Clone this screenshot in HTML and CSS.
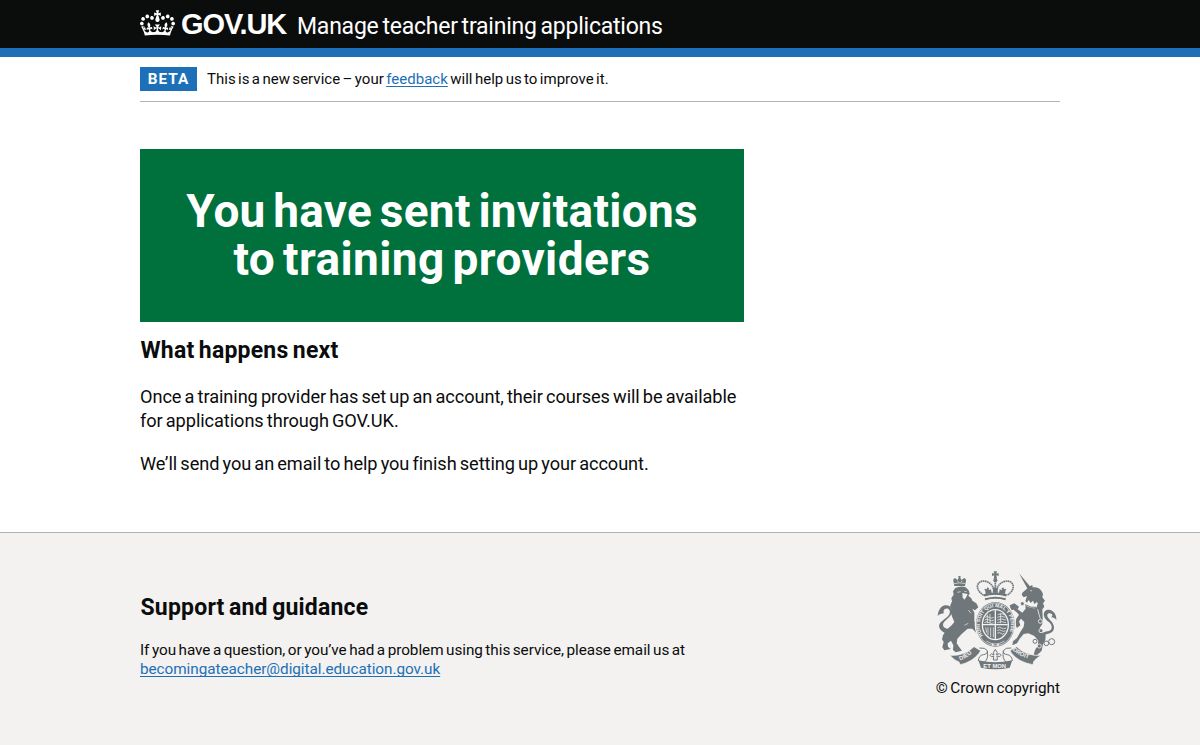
FILE: index.html
```html
<!DOCTYPE html>
<html lang="en">
<head>
<meta charset="utf-8">
<title>Manage teacher training applications</title>
<link rel="stylesheet" href="styles.css">
</head>
<body>
<header class="header">
  <div class="container header-row">
    <svg class="crown" viewBox="0 0 132 97" aria-hidden="true"><path fill="#fff" fill-rule="evenodd" d="M25 30.2c3.5 1.5 7.7-.2 9.1-3.7 1.5-3.6-.2-7.8-3.9-9.2-3.6-1.4-7.6.3-9.1 3.9-1.4 3.5.3 7.5 3.9 9zM9 39.5c3.6 1.5 7.8-.2 9.2-3.7 1.5-3.6-.2-7.8-3.9-9.1-3.6-1.5-7.6.2-9.1 3.8-1.4 3.5.3 7.5 3.8 9zM4.4 57.2c3.5 1.5 7.7-.2 9.1-3.8 1.5-3.6-.2-7.7-3.9-9.1-3.5-1.5-7.6.3-9.1 3.8-1.4 3.5.3 7.6 3.9 9.1zm38.3-21.4c3.5 1.5 7.7-.2 9.1-3.8 1.5-3.6-.2-7.7-3.9-9.1-3.6-1.5-7.6.3-9.1 3.8-1.3 3.6.4 7.7 3.9 9.1zm64.4-5.6c-3.6 1.5-7.8-.2-9.1-3.7-1.5-3.6.2-7.8 3.8-9.2 3.6-1.4 7.7.3 9.2 3.9 1.3 3.5-.4 7.5-3.9 9zm15.9 9.3c-3.6 1.5-7.7-.2-9.1-3.7-1.5-3.6.2-7.8 3.7-9.1 3.6-1.5 7.7.2 9.2 3.8 1.5 3.5-.3 7.5-3.8 9zm4.7 17.7c-3.6 1.5-7.8-.2-9.2-3.8-1.5-3.6.2-7.7 3.9-9.1 3.6-1.5 7.7.3 9.2 3.8 1.3 3.5-.4 7.6-3.9 9.1zM89.3 35.8c-3.6 1.5-7.8-.2-9.2-3.8-1.4-3.6.2-7.7 3.9-9.1 3.6-1.5 7.7.3 9.2 3.8 1.4 3.6-.3 7.7-3.9 9.1zM69.7 17.7l8.9 4.7V9.3l-8.9 2.8c-.2-.3-.5-.6-.9-.9L72.4 0H59.6l3.5 11.2c-.3.3-.6.5-.9.9l-8.8-2.8v13.1l8.8-4.7c.3.3.6.7.9.9l-5 15.4v.1c-.2.8-.4 1.6-.4 2.4 0 4.1 3.1 7.5 7 8.1h.2c.3 0 .7.1 1 .1.4 0 .7 0 1-.1h.2c4-.6 7.1-4.1 7.1-8.1 0-.8-.1-1.7-.4-2.4V34l-5.1-15.4c.4-.2.7-.6 1-.9zM66 92.8c16.9 0 32.8 1.1 47.1 3.2 4-16.9 8.9-26.7 14-33.5l-9.6-3.4c1 4.9 1.1 7.2 0 10.2-1.5-1.4-3-4.3-4.2-8.7L108.6 76c2.8-2 5-3.2 7.5-3.3-4.4 9.4-10 11.9-13.6 11.2-4.3-.8-6.3-4.6-5.6-7.9 1-4.7 5.7-5.9 8-.5 4.3-8.7-3-11.4-7.6-8.8 7.1-7.2 7.9-13.5 2.1-21.1-8 6.1-8.1 12.3-4.5 20.8-4.7-5.4-12.1-2.5-9.5 6.2 3.4-5.2 7.9-2 7.2 3.1-.6 4.3-6.4 7.8-13.5 7.2-10.3-.9-10.9-8-11.2-13.8 2.5-.5 7.1 1.8 11 7.3L80.2 60c-4.1 4.4-8 5.3-12.3 5.4 1.4-4.4 8-11.6 8-11.6H55.5s6.4 7.2 7.9 11.6c-4.2-.1-8-1-12.3-5.4l1.4 16.4c3.9-5.5 8.5-7.7 10.9-7.3-.3 5.8-.9 12.8-11.1 13.8-7.2.6-12.9-2.9-13.5-7.2-.7-5 3.8-8.3 7.1-3.1 2.7-8.7-4.6-11.6-9.4-6.2 3.7-8.5 3.6-14.7-4.6-20.8-5.8 7.6-5 13.9 2.2 21.1-4.7-2.6-11.9.1-7.7 8.8 2.3-5.5 7.1-4.2 8.1.5.7 3.3-1.3 7.1-5.7 7.9-3.5.7-9-1.8-13.5-11.2 2.5.1 4.7 1.3 7.5 3.3l-4.7-15.4c-1.2 4.4-2.7 7.2-4.3 8.7-1.1-3-.9-5.3 0-10.2l-9.5 3.4c5 6.9 9.9 16.7 14 33.5 14.8-2.1 30.8-3.2 47.7-3.2z"/></svg>
    <span class="logotype">GOV.UK</span>
    <span class="service">Manage teacher training applications</span>
  </div>
</header>
<div class="container">
  <div class="phase">
    <strong class="tag">BETA</strong>
    <span class="phase-text">This is a new service – your <a class="link" href="#">feedback</a> will help us to improve it.</span>
  </div>
  <main class="main">
    <div class="panel"><h1 class="panel-title"><span class="line line-a">You have sent invitations</span><span class="line line-b">to training providers</span></h1></div>
    <h2 class="heading next">What happens next</h2>
    <p class="body"><span class="line body-a">Once a training provider has set up an account, their courses will be available</span><span class="line body-b">for applications through GOV.UK.</span></p>
    <p class="body"><span class="line body-c">We’ll send you an email to help you finish setting up your account.</span></p>
  </main>
</div>
<footer class="footer">
  <div class="container footer-row">
    <div class="support">
      <h2 class="heading guide">Support and guidance</h2>
      <p class="small"><span class="line small-a">If you have a question, or you’ve had a problem using this service, please email us at</span><a class="link line small-b" href="#">becomingateacher@digital.education.gov.uk</a></p>
    </div>
    <div class="copyright">
      <svg class="arms" viewBox="36 33 360 297" fill="#6f777b" aria-hidden="true">
        <defs>
          <path id="motto" d="M174 227A47 53 0 1 1 248 227"/>
          <path id="dieu" d="M105 301Q132 292 155 268"/>
          <path id="droit" d="M263 270Q287 294 331 300"/>
        </defs>
        <!-- lion -->
        <path d="M88 78l-3-16c-1-7 5-10 10-4l2 3 4-8-1-5h7l-1 5 4 8 2-3c5-6 12-3 11 4l-3 16z"/>
        <path d="M87 71q17-5 34 0M97 62l4 5m11-5-4 5" fill="none" stroke="#f3f2f1" stroke-width="2"/>
        <path d="M91 84Q108 76 122 82L131 91 134 101 130 107 139 115 142 122 154 130 160 142 150 151 142 146 148 158 148 184 158 198 167 212 157 222 142 206 128 206 110 222 97 236 95 250 103 262 111 272 92 277 84 270 85 256 78 242 68 250 69 260 77 267 58 271 52 262 56 246 51 238 54 226 64 210 80 196 88 186 82 172 77 156 79 146 75 138 81 124 79 114 86 104 84 94Z"/>
        <path d="M88 222C64 227 44 213 42 199c0-16 23-21 31-36 5-12-2-19-11-17-7 2-8 9-5 14-8 0-14 3-19 8 2-16 8-29 22-32 14-2 23 8 21 21-3 17-27 25-27 37 0 11 17 15 34 12z"/>
        <path d="M112 99l16 3-4 9-6 8-5-7z" fill="#f3f2f1"/>
        <path d="M97 97l10-2m11 0 7-1M130 150l8 10m-20 36 12-6" fill="none" stroke="#f3f2f1" stroke-width="2"/>
        <!-- unicorn -->
        <path d="M282 40l34 40-8 7z"/>
        <path d="M290 104L292 98 304 88 314 79 322 75 323 82Q342 80 350 94L354 102 352 112 360 122 354 130 358 140 352 148 353 176 352 192 344 204 350 216 362 226 361 240 354 252 350 272 336 286 326 284 330 270 338 258 340 242 328 228 310 220 296 222 284 236 276 250 262 256 264 244 276 234 286 216 296 200 298 186 288 176 282 184 286 196 276 204 270 192 274 176 282 164 274 156 264 148 264 136 276 146 292 158 302 146 300 126 306 108 296 112Z"/>
        <path d="M258 150l-4-14 14-6 14 10-4 8-12-8-2 10z"/>
        <circle cx="318" cy="92" r="2" fill="#f3f2f1"/>
        <path d="M300 122l6 6 5-8 6 9 7-7 4 10 8-6 2 4-3 13q-18 6-37-9z" fill="#f3f2f1"/><path d="M301 134q16 11 34 8" fill="none" stroke="#6f777b" stroke-width="3"/>
        <path d="M350 222c10-12 27-4 30-18 3-17-20-20-23-36-3-14 7-22 19-18 11 4 19 15 18 30-4-5-8-8-15-8l3-5c1-8-12-10-15-3-3 12 22 20 20 41-2 20-26 14-35 25z"/>
        <g fill="none" stroke="#6f777b" stroke-width="3"><circle cx="330" cy="244" r="6"/><circle cx="364" cy="250" r="7"/><circle cx="380" cy="245" r="9"/></g>
        <g fill="#6f777b" stroke="#f3f2f1" stroke-width="2.5"><circle cx="346" cy="184" r="6"/><circle cx="348" cy="212" r="6"/><circle cx="343" cy="258" r="6"/><circle cx="292" cy="131" r="6"/><path d="M338 148q4 16 8 28" fill="none"/></g>
        <!-- royal crown -->
        <g fill="none" stroke="#6f777b"><path d="M176 106C144 86 158 58 182 64c17 4 24 18 29 34 5-16 12-30 29-34 24-6 38 22 6 42" stroke-width="5" stroke-dasharray="5 1.5"/><path d="M177 106q34-10 68 0" stroke-width="7"/><path d="M180 118q31-9 62 0" stroke-width="6"/><path d="M211 62v36" stroke-width="5" stroke-dasharray="5 1.5"/></g>
        <path d="M206 34h10l-2 7 7-2v9l-7-2 2 10h-10l2-10-7 2v-9l7 2z"/><circle cx="211" cy="61" r="6"/>
        <path d="M181 94l-3-8 7 2 2-6 5 3-1 6 7-3 2 11-18 4zM241 94l3-8-7 2-2-6-5 3 1 6-7-3-2 11 18 4zM204 90l-2-6 6 1 3-6 3 6 6-1-2 6 1 8h-16z"/>
        <!-- garter -->
        <ellipse cx="211" cy="193" rx="60" ry="69" stroke="#f3f2f1" stroke-width="4"/>
        <ellipse cx="211" cy="193" rx="56" ry="64" fill="none" stroke="#f3f2f1" stroke-width="2"/>
        <ellipse cx="211" cy="194" rx="41" ry="47" fill="#f3f2f1"/><ellipse cx="211" cy="194" rx="37" ry="43"/>
        <path d="M211 151v86M174 194h74" stroke="#f3f2f1" stroke-width="4"/>
        <path d="M181 172q6-5 12 0t13 0M179 180q7-5 14 0t14 0M178 188q7-5 14 0t14 0M217 204q7-5 13 0t13 0M217 212q7-5 13 0t12 0M217 220q6-5 11 0t10 0M218 164q12-6 20 0M217 172q12-6 24 0M217 180q12-6 26 0M217 188q12-6 26 0M182 202l3 16m4-16v24m8-24v29m8-29v30M187 164v26m8-28v28m32-30v30" fill="none" stroke="#f3f2f1" stroke-width="2.2"/>
        <text class="motto"><textPath href="#motto">HONI SOIT QUI MAL Y PENSE</textPath></text>
        <path d="M184 243q27 18 54 0" fill="none" stroke="#f3f2f1" stroke-width="2"/><circle cx="203" cy="254" r="3" fill="#f3f2f1"/><circle cx="219" cy="254" r="3" fill="#f3f2f1"/>
        <!-- ribbons -->
        <path d="M75 286q43 3 72-26l20 12-5 8q-20 26-56 34l-4-8-12-6q-8-6-15-14z" stroke="#f3f2f1" stroke-width="2"/>
        <path d="M347 286q-43 3-72-26l-20 12 5 8q20 26 64 34 0-10 8-16z" stroke="#f3f2f1" stroke-width="2"/>
        <path d="M160 301q50 12 102 0l-8 22q-43 10-86 0z"/>
        <g fill="none" stroke="#6f777b" stroke-width="3"><path d="M163 264q18-2 24 8 2 10-12 12-14 2-15 19M259 264q-18-2-24 8-2 10 12 12 14 2 15 19M187 274q4 22-8 32M235 274q-4 22 8 32"/></g>
        <path d="M211 268q-9 9-4 17-9-8-12 1 3 8 11 2l-1 12h12l-1-12q11 5 12-2-3-9-13-1 5-8-4-17z" fill="#f3f2f1" stroke="#6f777b" stroke-width="3"/>
        <text class="ribbon"><textPath href="#dieu">DIEU</textPath></text><text class="ribbon"><textPath href="#droit">DROIT</textPath></text><text class="ribbon" x="175" y="323">ET MON</text>
      </svg>
      <span class="line copy-text">© Crown copyright</span>
    </div>
  </div>
</footer>
</body>
</html>
```
FILE: styles.css
```css
* { box-sizing: border-box; }
body { margin: 0; background: #fff; color: #0b0c0c; font-family: Roboto, "Liberation Sans", sans-serif; }
h1, h2, p { margin: 0; }
.container { width: 920px; margin: 0 auto; }
.line { display: block; width: max-content; white-space: nowrap; }
.link { color: #1d70b8; text-decoration: underline; text-decoration-thickness: 1px; text-underline-offset: 2px; text-decoration-skip-ink: none; }

.header { height: 57px; background: #0b0c0c; border-bottom: 9px solid #1d70b8; color: #fff; }
.header-row { display: flex; height: 48px; }
.crown { width: 35px; height: 26px; margin: 10px 6px 0 0; }
.logotype { width: 116px; padding-top: 6px; font: 700 29px/36px "Liberation Sans", Arial, sans-serif; letter-spacing: -1.1px; }
.service { padding-top: 12px; font-size: 23px; line-height: 30px; white-space: nowrap; letter-spacing: -0.23px; word-spacing: -1.6px; }

.phase { display: flex; align-items: center; height: 45px; border-bottom: 1px solid #b1b4b6; }
.tag { width: 57px; height: 24px; margin-right: 10px; background: #1d70b8; color: #fff; font-size: 15.3px; line-height: 24px; text-align: center; letter-spacing: 1px; }
.phase-text { font-size: 15px; line-height: 20px; white-space: nowrap; word-spacing: -1.4px; letter-spacing: 0.03px; }

.main { height: 430px; padding-top: 47px; }
.panel { width: 604px; height: 173px; padding-top: 38px; background: #00703c; color: #fff; }
.panel-title { display: flex; flex-direction: column; align-items: center; font-size: 46px; line-height: 48px; letter-spacing: 0.25px; word-spacing: -4px; }
.line-b { letter-spacing: 0.4px; }
.heading { font-size: 23px; line-height: 29px; font-weight: 700; width: max-content; padding-left: 0.5px; word-spacing: -1.5px; letter-spacing: 0.2px; }
.next { margin: 14px 0 20px; }
.body { margin-bottom: 19px; font-size: 18.2px; line-height: 24px; word-spacing: -1.3px; letter-spacing: -0.072px; }

.footer { height: 213px; background: #f3f2f1; border-top: 1px solid #b1b4b6; }
.footer-row { display: flex; justify-content: space-between; }
.support { padding-top: 60px; }
.guide { margin-bottom: 19px; }
.small { font-size: 15.3px; line-height: 19px; word-spacing: -1.25px; letter-spacing: -0.045px; }
.copyright { display: flex; flex-direction: column; align-items: flex-end; padding-top: 38px; }
.arms { width: 120px; height: 99px; margin-right: 3px; }
.copy-text { margin-top: 8px; font-size: 15.3px; line-height: 20px; word-spacing: -1.2px; }
.motto { fill: #f3f2f1; font: 700 15px "Liberation Sans", sans-serif; letter-spacing: 0; }
.ribbon { fill: #f3f2f1; font: 700 17.5px "Liberation Sans", sans-serif; }
```
